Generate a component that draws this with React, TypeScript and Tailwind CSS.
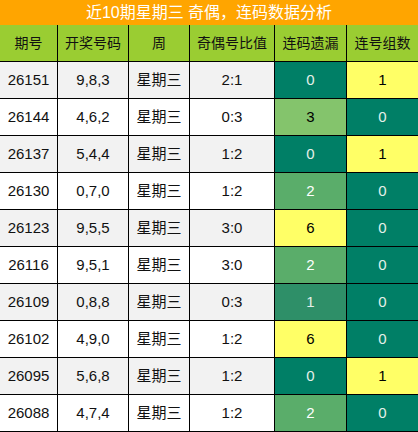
const rows = [
  { id: '26151', nums: '9,8,3', ratio: '2:1', gap: '0', gapBg: 'bg-[#007f66] text-[#e4efe9]', grp: '1', grpBg: 'bg-[#ffff66] text-black' },
  { id: '26144', nums: '4,6,2', ratio: '0:3', gap: '3', gapBg: 'bg-[#84c46c] text-black', grp: '0', grpBg: 'bg-[#007f66] text-[#e4efe9]' },
  { id: '26137', nums: '5,4,4', ratio: '1:2', gap: '0', gapBg: 'bg-[#007f66] text-[#e4efe9]', grp: '1', grpBg: 'bg-[#ffff66] text-black' },
  { id: '26130', nums: '0,7,0', ratio: '1:2', gap: '2', gapBg: 'bg-[#5aad6a] text-white', grp: '0', grpBg: 'bg-[#007f66] text-[#e4efe9]' },
  { id: '26123', nums: '9,5,5', ratio: '3:0', gap: '6', gapBg: 'bg-[#ffff66] text-black', grp: '0', grpBg: 'bg-[#007f66] text-[#e4efe9]' },
  { id: '26116', nums: '9,5,1', ratio: '3:0', gap: '2', gapBg: 'bg-[#5aad6a] text-white', grp: '0', grpBg: 'bg-[#007f66] text-[#e4efe9]' },
  { id: '26109', nums: '0,8,8', ratio: '0:3', gap: '1', gapBg: 'bg-[#2e8f68] text-[#e4efe9]', grp: '0', grpBg: 'bg-[#007f66] text-[#e4efe9]' },
  { id: '26102', nums: '4,9,0', ratio: '1:2', gap: '6', gapBg: 'bg-[#ffff66] text-black', grp: '0', grpBg: 'bg-[#007f66] text-[#e4efe9]' },
  { id: '26095', nums: '5,6,8', ratio: '1:2', gap: '0', gapBg: 'bg-[#007f66] text-[#e4efe9]', grp: '1', grpBg: 'bg-[#ffff66] text-black' },
  { id: '26088', nums: '4,7,4', ratio: '1:2', gap: '2', gapBg: 'bg-[#5aad6a] text-white', grp: '0', grpBg: 'bg-[#007f66] text-[#e4efe9]' },
]

const headers = ['期号', '开奖号码', '周', '奇偶号比值', '连码遗漏', '连号组数']

const cell = 'flex items-center justify-center h-[37px] border-b border-r border-black'

export default function App() {
  return (
    <div className="w-[418px] h-[432px] overflow-hidden bg-white font-['Liberation_Sans','Noto_Sans_CJK_SC',sans-serif]">
      {/* title */}
      <div className="h-[25px] bg-[#ffa500] text-white text-[16px] leading-[25px] text-center">
        近10期星期三 奇偶，连码数据分析
      </div>

      <div className="grid grid-cols-[58px_71px_61px_85px_72px_71px]">
        {headers.map((h, i) => (
          <div key={h} className={`${cell} bg-[#9acd32] text-[14px] text-[#111] ${i === 5 ? 'border-r-0' : ''}`}>
            {h}
          </div>
        ))}

        {rows.map((r, idx) => {
          const bg = idx % 2 === 0 ? 'bg-[#f2f2f2]' : 'bg-white'
          return (
            <div key={r.id} className="contents text-[15px] text-[#111]">
              <div className={`${cell} ${bg}`}>{r.id}</div>
              <div className={`${cell} ${bg}`}>{r.nums}</div>
              <div className={`${cell} ${bg}`}>星期三</div>
              <div className={`${cell} ${bg}`}>{r.ratio}</div>
              <div className={`${cell} ${r.gapBg}`}>{r.gap}</div>
              <div className={`${cell} border-r-0 ${r.grpBg}`}>{r.grp}</div>
            </div>
          )
        })}
      </div>
    </div>
  )
}
